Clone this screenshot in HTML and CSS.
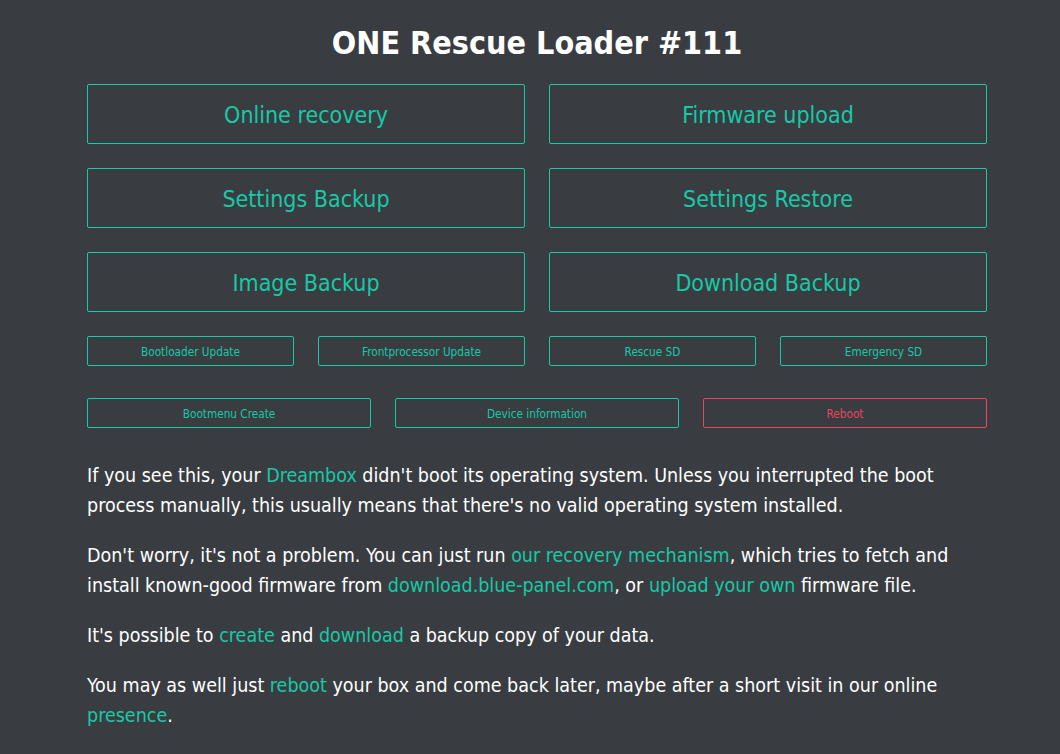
FILE: index.html
```html
<!DOCTYPE html>
<html lang="en">
<head>
    <meta charset="UTF-8">
    <meta name="viewport" content="width=device-width, initial-scale=1.0">
    <title>ONE Rescue Loader #111</title>
    <link rel="stylesheet" href="styles.css">
</head>
<body>
    <div class="page">
        <h1>ONE Rescue Loader #111</h1>

        <!-- Main actions -->
        <div class="actions">
            <a class="btn big" href="#">Online recovery</a>
            <a class="btn big" href="#">Firmware upload</a>
            <a class="btn big" href="#">Settings Backup</a>
            <a class="btn big" href="#">Settings Restore</a>
            <a class="btn big" href="#">Image Backup</a>
            <a class="btn big" href="#">Download Backup</a>
        </div>

        <!-- Tools -->
        <div class="tools four">
            <a class="btn small" href="#">Bootloader Update</a>
            <a class="btn small" href="#">Frontprocessor Update</a>
            <a class="btn small" href="#">Rescue SD</a>
            <a class="btn small" href="#">Emergency SD</a>
        </div>
        <div class="tools three">
            <a class="btn small" href="#">Bootmenu Create</a>
            <a class="btn small" href="#">Device information</a>
            <a class="btn small danger" href="#">Reboot</a>
        </div>

        <div class="info">
            <p>If you see this, your <a href="#">Dreambox</a> didn't boot its operating system. Unless you interrupted the boot process manually, this usually means that there's no valid operating system installed.</p>
            <p>Don't worry, it's not a problem. You can just run <a href="#">our recovery mechanism</a>, which tries to fetch and install known-good firmware from <a href="#">download.blue-panel.com</a>, or <a href="#">upload your own</a> firmware file.</p>
            <p>It's possible to <a href="#">create</a> and <a href="#">download</a> a backup copy of your data.</p>
            <p>You may as well just <a href="#">reboot</a> your box and come back later, maybe after a short visit in our online <a href="#">presence</a>.</p>
        </div>
    </div>
</body>
</html>
```

FILE: styles.css
```css
/* Rescue loader page */
body {
    margin: 0;
    padding: 0 0 0 14px;
    background-color: #393d42;
    color: #fff;
    font-family: "DejaVu Sans Condensed", "DejaVu Sans", sans-serif;
    font-stretch: condensed;
}

.page {
    width: 900px;
    margin: 0 auto;
}

h1 {
    margin: 0;
    padding-top: 23px;
    height: 40px;
    line-height: 40px;
    font-size: 32px;
    font-weight: bold;
    text-align: center;
}

a {
    color: #17c9a5;
    text-decoration: none;
}

.btn {
    display: flex;
    align-items: center;
    justify-content: center;
    padding-top: 2px;
    border: 1px solid #17c9a5;
    border-radius: 2px;
    box-sizing: border-box;
}

.btn.big {
    height: 60px;
    font-size: 23px;
}

.btn.small {
    height: 30px;
    font-size: 11.7px;
}

.btn.danger {
    color: #e8455f;
    border-color: #e8455f;
}

.actions {
    margin-top: 21px;
    display: grid;
    grid-template-columns: 1fr 1fr;
    gap: 24px;
}

.tools {
    display: grid;
    gap: 24px;
}

.tools.four {
    margin-top: 24px;
    grid-template-columns: repeat(4, 1fr);
}

.tools.three {
    margin-top: 32px;
    grid-template-columns: repeat(3, 1fr);
}

.info {
    margin-top: 33px;
}

.info p {
    margin: 0 0 20px;
    font-size: 19.5px;
    line-height: 30px;
}
```
